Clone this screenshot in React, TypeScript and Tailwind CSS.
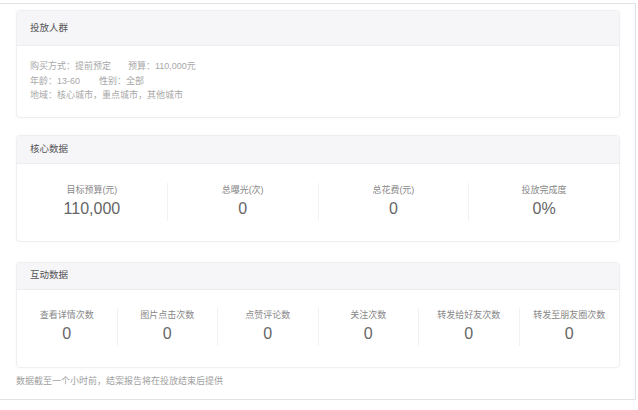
const cjk = { fontFamily: '"Liberation Sans", "Noto Sans CJK SC", sans-serif' };

const coreStats = [
  { label: '目标预算(元)', value: '110,000' },
  { label: '总曝光(次)', value: '0' },
  { label: '总花费(元)', value: '0' },
  { label: '投放完成度', value: '0%' },
];

const interactStats = [
  { label: '查看详情次数', value: '0' },
  { label: '图片点击次数', value: '0' },
  { label: '点赞评论数', value: '0' },
  { label: '关注次数', value: '0' },
  { label: '转发给好友次数', value: '0' },
  { label: '转发至朋友圈次数', value: '0' },
];

function Card({ title, headerH, children }: { title: string; headerH: string; children: React.ReactNode }) {
  return (
    <div className="w-[604px] rounded-[4px] border border-[#efeff2] bg-white shadow-[0_0_3px_rgba(0,0,0,0.04)] overflow-hidden">
      <div className={`${headerH} flex items-center px-[13px] bg-[#f6f6f9] border-b border-[#eeeef2] text-[9.5px] text-[#555]`}>
        {title}
      </div>
      {children}
    </div>
  );
}

function StatRow({ items, pt, pb }: { items: { label: string; value: string }[]; pt: string; pb: string }) {
  return (
    <div className={`flex ${pt} ${pb}`}>
      {items.map((s, i) => (
        <div
          key={s.label}
          className={`flex-1 flex flex-col items-center ${i > 0 ? 'border-l border-[#f2f2f4]' : ''}`}
        >
          <div className="text-[9px] leading-[14px] text-[#888]">{s.label}</div>
          <div className="text-[16px] leading-[24px] text-[#666]">{s.value}</div>
        </div>
      ))}
    </div>
  );
}

export default function App() {
  return (
    <div className="w-[638px] h-[410px] bg-white" style={cjk}>
      <div className="mt-[3px] w-[636px] h-[397px] border-t border-r border-b border-[#e2e2e2] pt-[6px] pl-[16px]">
        <Card title="投放人群" headerH="h-[35px]">
          <div className="px-[13px] pt-[13px] pb-[14px] text-[9px] leading-[14.5px] text-[#a8a8a8]">
            <div>
              <span className="inline-block w-[98px]">购买方式：提前预定</span>
              <span>预算：110,000元</span>
            </div>
            <div>
              <span className="inline-block w-[69px]">年龄：13-60</span>
              <span>性别：全部</span>
            </div>
            <div>地域：核心城市，重点城市，其他城市</div>
          </div>
        </Card>

        <div className="mt-[17px]">
          <Card title="核心数据" headerH="h-[28px]">
            <StatRow items={coreStats} pt="pt-[19px]" pb="pb-[20px]" />
          </Card>
        </div>

        <div className="mt-[20px]">
          <Card title="互动数据" headerH="h-[27px]">
            <StatRow items={interactStats} pt="pt-[18px]" pb="pb-[21px]" />
          </Card>
        </div>

        <div className="mt-[6px] text-[9px] leading-[14px] text-[#a0a0a0]">
          数据截至一个小时前，结案报告将在投放结束后提供
        </div>
      </div>
    </div>
  );
}
